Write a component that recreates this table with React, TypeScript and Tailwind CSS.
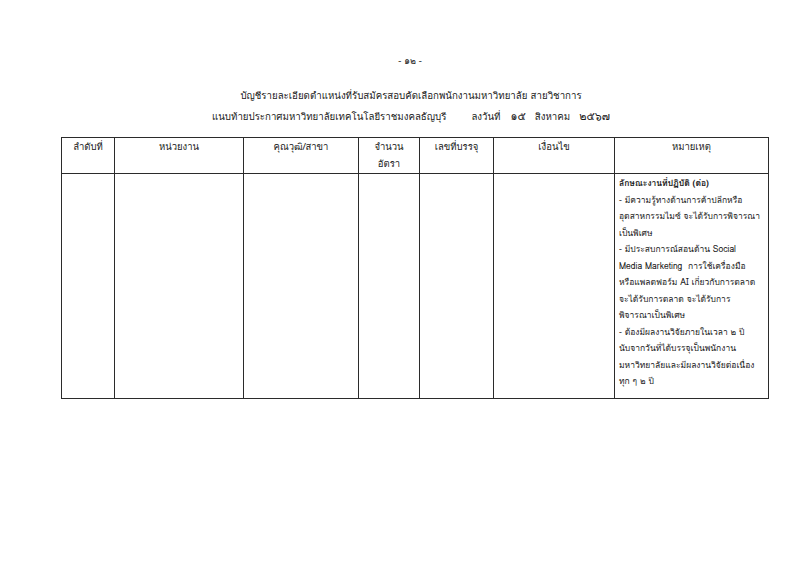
const remarks: { text: string; bold?: boolean }[] = [
  { text: "ลักษณะงานที่ปฏิบัติ (ต่อ)", bold: true },
  { text: "- มีความรู้ทางด้านการค้าปลีกหรือ" },
  { text: "อุตสาหกรรมไมซ์ จะได้รับการพิจารณา" },
  { text: "เป็นพิเศษ" },
  { text: "- มีประสบการณ์สอนด้าน Social" },
  { text: "Media Marketing  การใช้เครื่องมือ" },
  { text: "หรือแพลตฟอร์ม AI เกี่ยวกับการตลาด" },
  { text: "จะได้รับการตลาด จะได้รับการ" },
  { text: "พิจารณาเป็นพิเศษ" },
  { text: "- ต้องมีผลงานวิจัยภายในเวลา ๒ ปี" },
  { text: "นับจากวันที่ได้บรรจุเป็นพนักงาน" },
  { text: "มหาวิทยาลัยและมีผลงานวิจัยต่อเนื่อง" },
  { text: "ทุก ๆ ๒ ปี" },
];

const cell = "border border-[#2b2b2b] align-top";
const head = `${cell} font-normal`;

export default function App() {
  return (
    <div
      className="w-[800px] h-[566px] bg-white text-[#1a1a1a] overflow-hidden"
      style={{ fontFamily: '"Loma", "Tahoma", "Noto Sans", "DejaVu Sans", sans-serif' }}
    >
      <div className="pt-[53px] text-center text-[9px] leading-[16px] pl-[20px]">- ๑๒ -</div>

      <div className="mt-[17px] flex flex-col items-center text-[9.7px] leading-[20px] pl-[22px]">
        <p>บัญชีรายละเอียดตำแหน่งที่รับสมัครสอบคัดเลือกพนักงานมหาวิทยาลัย สายวิชาการ</p>
        <p className="flex items-baseline">
          <span>แนบท้ายประกาศมหาวิทยาลัยเทคโนโลยีราชมงคลธัญบุรี</span>
          <span className="ml-[25px]">ลงวันที่</span>
          <span className="ml-[10px] text-[11px]">๑๕</span>
          <span className="ml-[9px]">สิงหาคม</span>
          <span className="ml-[9px] text-[11px]">๒๕๖๗</span>
        </p>
      </div>

      <table className="ml-[61px] mt-[10px] w-[707px] table-fixed border-collapse text-[9.5px]">
        <colgroup>
          <col className="w-[53px]" />
          <col className="w-[129px]" />
          <col className="w-[115px]" />
          <col className="w-[61px]" />
          <col className="w-[74px]" />
          <col className="w-[121px]" />
          <col className="w-[154px]" />
        </colgroup>
        <thead>
          <tr className="h-[36px] text-center leading-[17px]">
            <th className={head}>ลำดับที่</th>
            <th className={head}>หน่วยงาน</th>
            <th className={head}>คุณวุฒิ/สาขา</th>
            <th className={head}>
              จำนวน
              <br />
              อัตรา
            </th>
            <th className={head}>เลขที่บรรจุ</th>
            <th className={head}>เงื่อนไข</th>
            <th className={head}>หมายเหตุ</th>
          </tr>
        </thead>
        <tbody>
          <tr className="h-[225px]">
            <td className={cell} />
            <td className={cell} />
            <td className={cell} />
            <td className={cell} />
            <td className={cell} />
            <td className={cell} />
            <td className={`${cell} pl-[4px] pt-[1px] text-[8.5px] leading-[16.5px]`}>
              {remarks.map((r, i) => (
                <div key={i} className={`whitespace-pre ${r.bold ? "font-bold" : ""}`}>
                  {r.text}
                </div>
              ))}
            </td>
          </tr>
        </tbody>
      </table>
    </div>
  );
}
